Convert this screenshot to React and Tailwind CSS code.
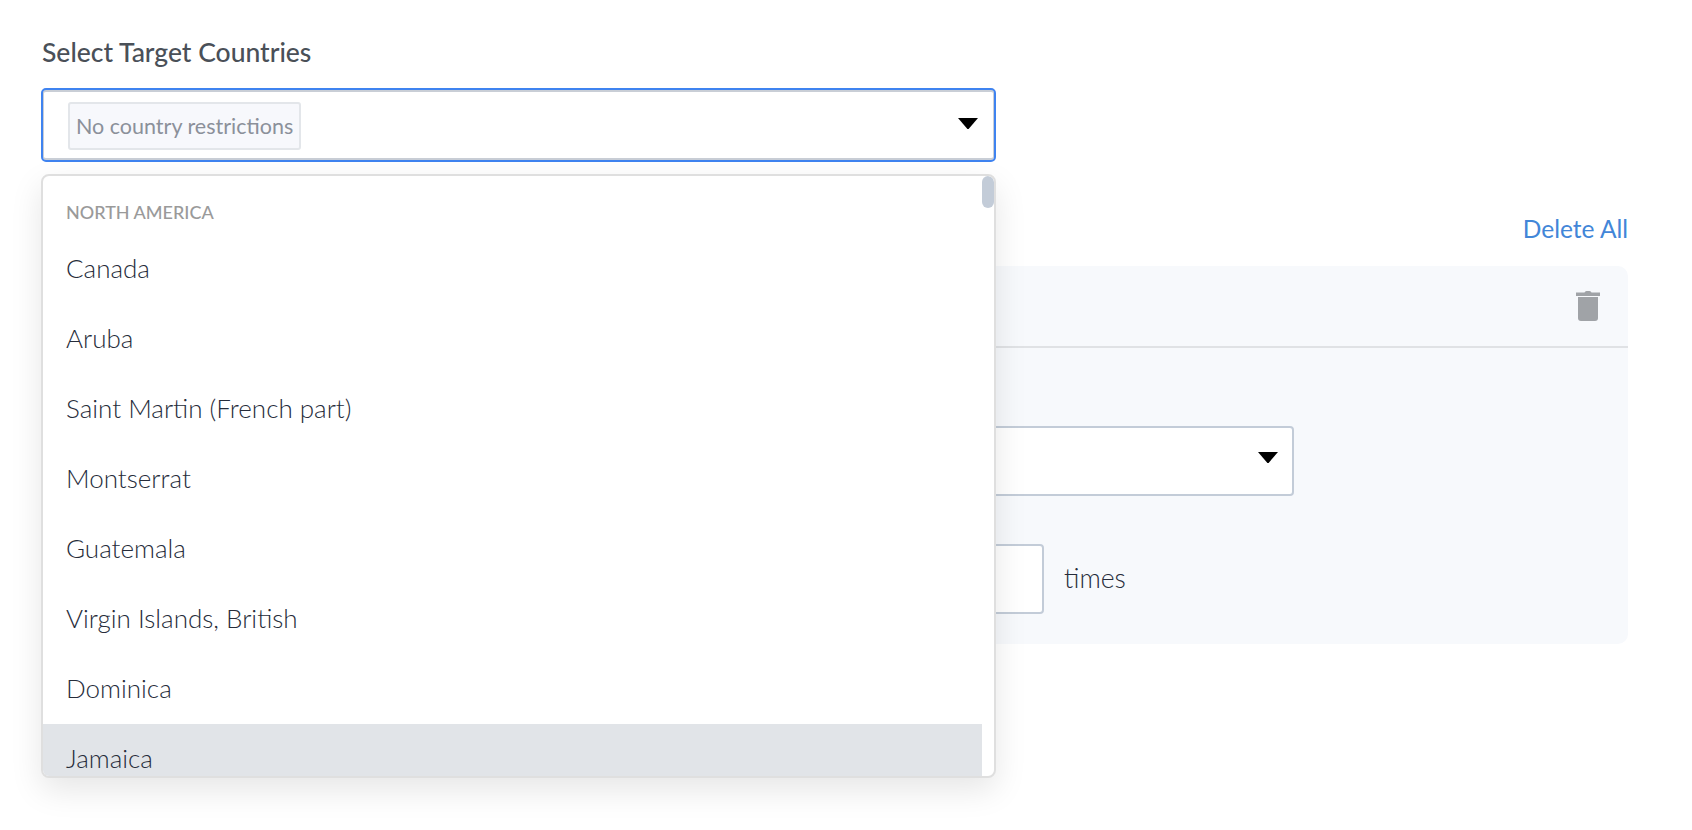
const FONT = "font-['Lato','Noto_Sans',sans-serif]";

function Caret({ className = "" }) {
  return (
    <svg width="20" height="11" viewBox="0 0 20 11" className={className}>
      <path d="M0 0H20L10.6 11H9.4Z" fill="#000" />
    </svg>
  );
}

function Trash() {
  return (
    <svg width="24" height="30" viewBox="0 0 24 30">
      <path d="M0 1.6H8.5Q9 0 10.5 0H13.5Q15 0 15.5 1.6H24V5H0Z" fill="#a0a3a7" />
      <path d="M2 6H22V27Q22 30 19 30H5Q2 30 2 27Z" fill="#a0a3a7" />
    </svg>
  );
}

const countries = ["Canada", "Aruba", "Saint Martin (French part)", "Montserrat", "Guatemala", "Virgin Islands, British", "Dominica"];

export default function App() {
  return (
    <div className={`${FONT} relative w-[1692px] h-[830px] overflow-hidden bg-white pl-[41px] pr-[64px] pt-[36px]`}>
      <div className="text-[26.5px] leading-[32px] font-medium text-[#4a5058] pl-[1px]">Select Target Countries</div>

      <div className="relative mt-[20px] w-[955px]">
        <div className="h-[74px] border-2 border-[#3f83f0] rounded-[5px] shadow-[inset_0_2px_0_#c9ced6,inset_0_-2px_0_#c9ced6,inset_0_0_0_1px_#c9ced6] bg-white flex items-center justify-between pl-[25px] pr-[16px]">
          <div className="mt-[2px] h-[48px] px-[6px] flex items-center rounded-[3px] border-2 border-[#e3e6ea] bg-[#f7f8fc] text-[21.5px] font-normal text-[#8b909a] whitespace-nowrap">
            No country restrictions
          </div>
          <Caret className="-mt-[3px]" />
        </div>

        <div className="absolute z-10 left-0 top-[86px] w-[955px] h-[604px] bg-white border-2 border-[#dfdfdf] rounded-[8px] shadow-[0_12px_32px_rgba(0,0,0,0.1)] overflow-hidden">
          <div className="w-[939px]">
            <div className="h-[58px] pl-[23px] pt-[23px] text-[18px] leading-[26px] font-medium text-[#9a9a9a] uppercase">North America</div>
            {countries.map((c) => (
              <div key={c} className="h-[70px] pl-[23px] pb-[2px] flex items-center text-[26px] font-light text-[#262c3a]">{c}</div>
            ))}
            <div className="h-[70px] pl-[23px] pb-[2px] flex items-center text-[26px] font-light text-[#262c3a] bg-[#e1e4e8]">Jamaica</div>
          </div>
          <div className="absolute right-0 top-0 w-[12px] h-[32px] rounded-full bg-[#c3ccd8]"></div>
        </div>
      </div>

      <div className="flex justify-end mt-[49px] h-[36px] items-center text-[24.5px] font-normal text-[#4286d8]">Delete All</div>

      <div className="mt-[19px] h-[378px] rounded-[10px] bg-[#f7f9fc]">
        <div className="h-[82px] border-b-2 border-[#e0e2e5] flex justify-end items-start pt-[25px] pr-[28px]">
          <Trash />
        </div>
        <div className="pl-[300px]">
          <div className="mt-[78px] h-[70px] w-[953px] border-2 border-[#c3ccd8] rounded-[4px] bg-white flex items-center justify-end pr-[14px]">
            <Caret className="-mt-[8px]" />
          </div>
          <div className="mt-[48px] flex items-center gap-[20px]">
            <div className="h-[70px] w-[703px] border-2 border-[#c3ccd8] rounded-[4px] bg-white"></div>
            <div className="text-[26.5px] font-light text-[#262c3a]">times</div>
          </div>
        </div>
      </div>
    </div>
  );
}
